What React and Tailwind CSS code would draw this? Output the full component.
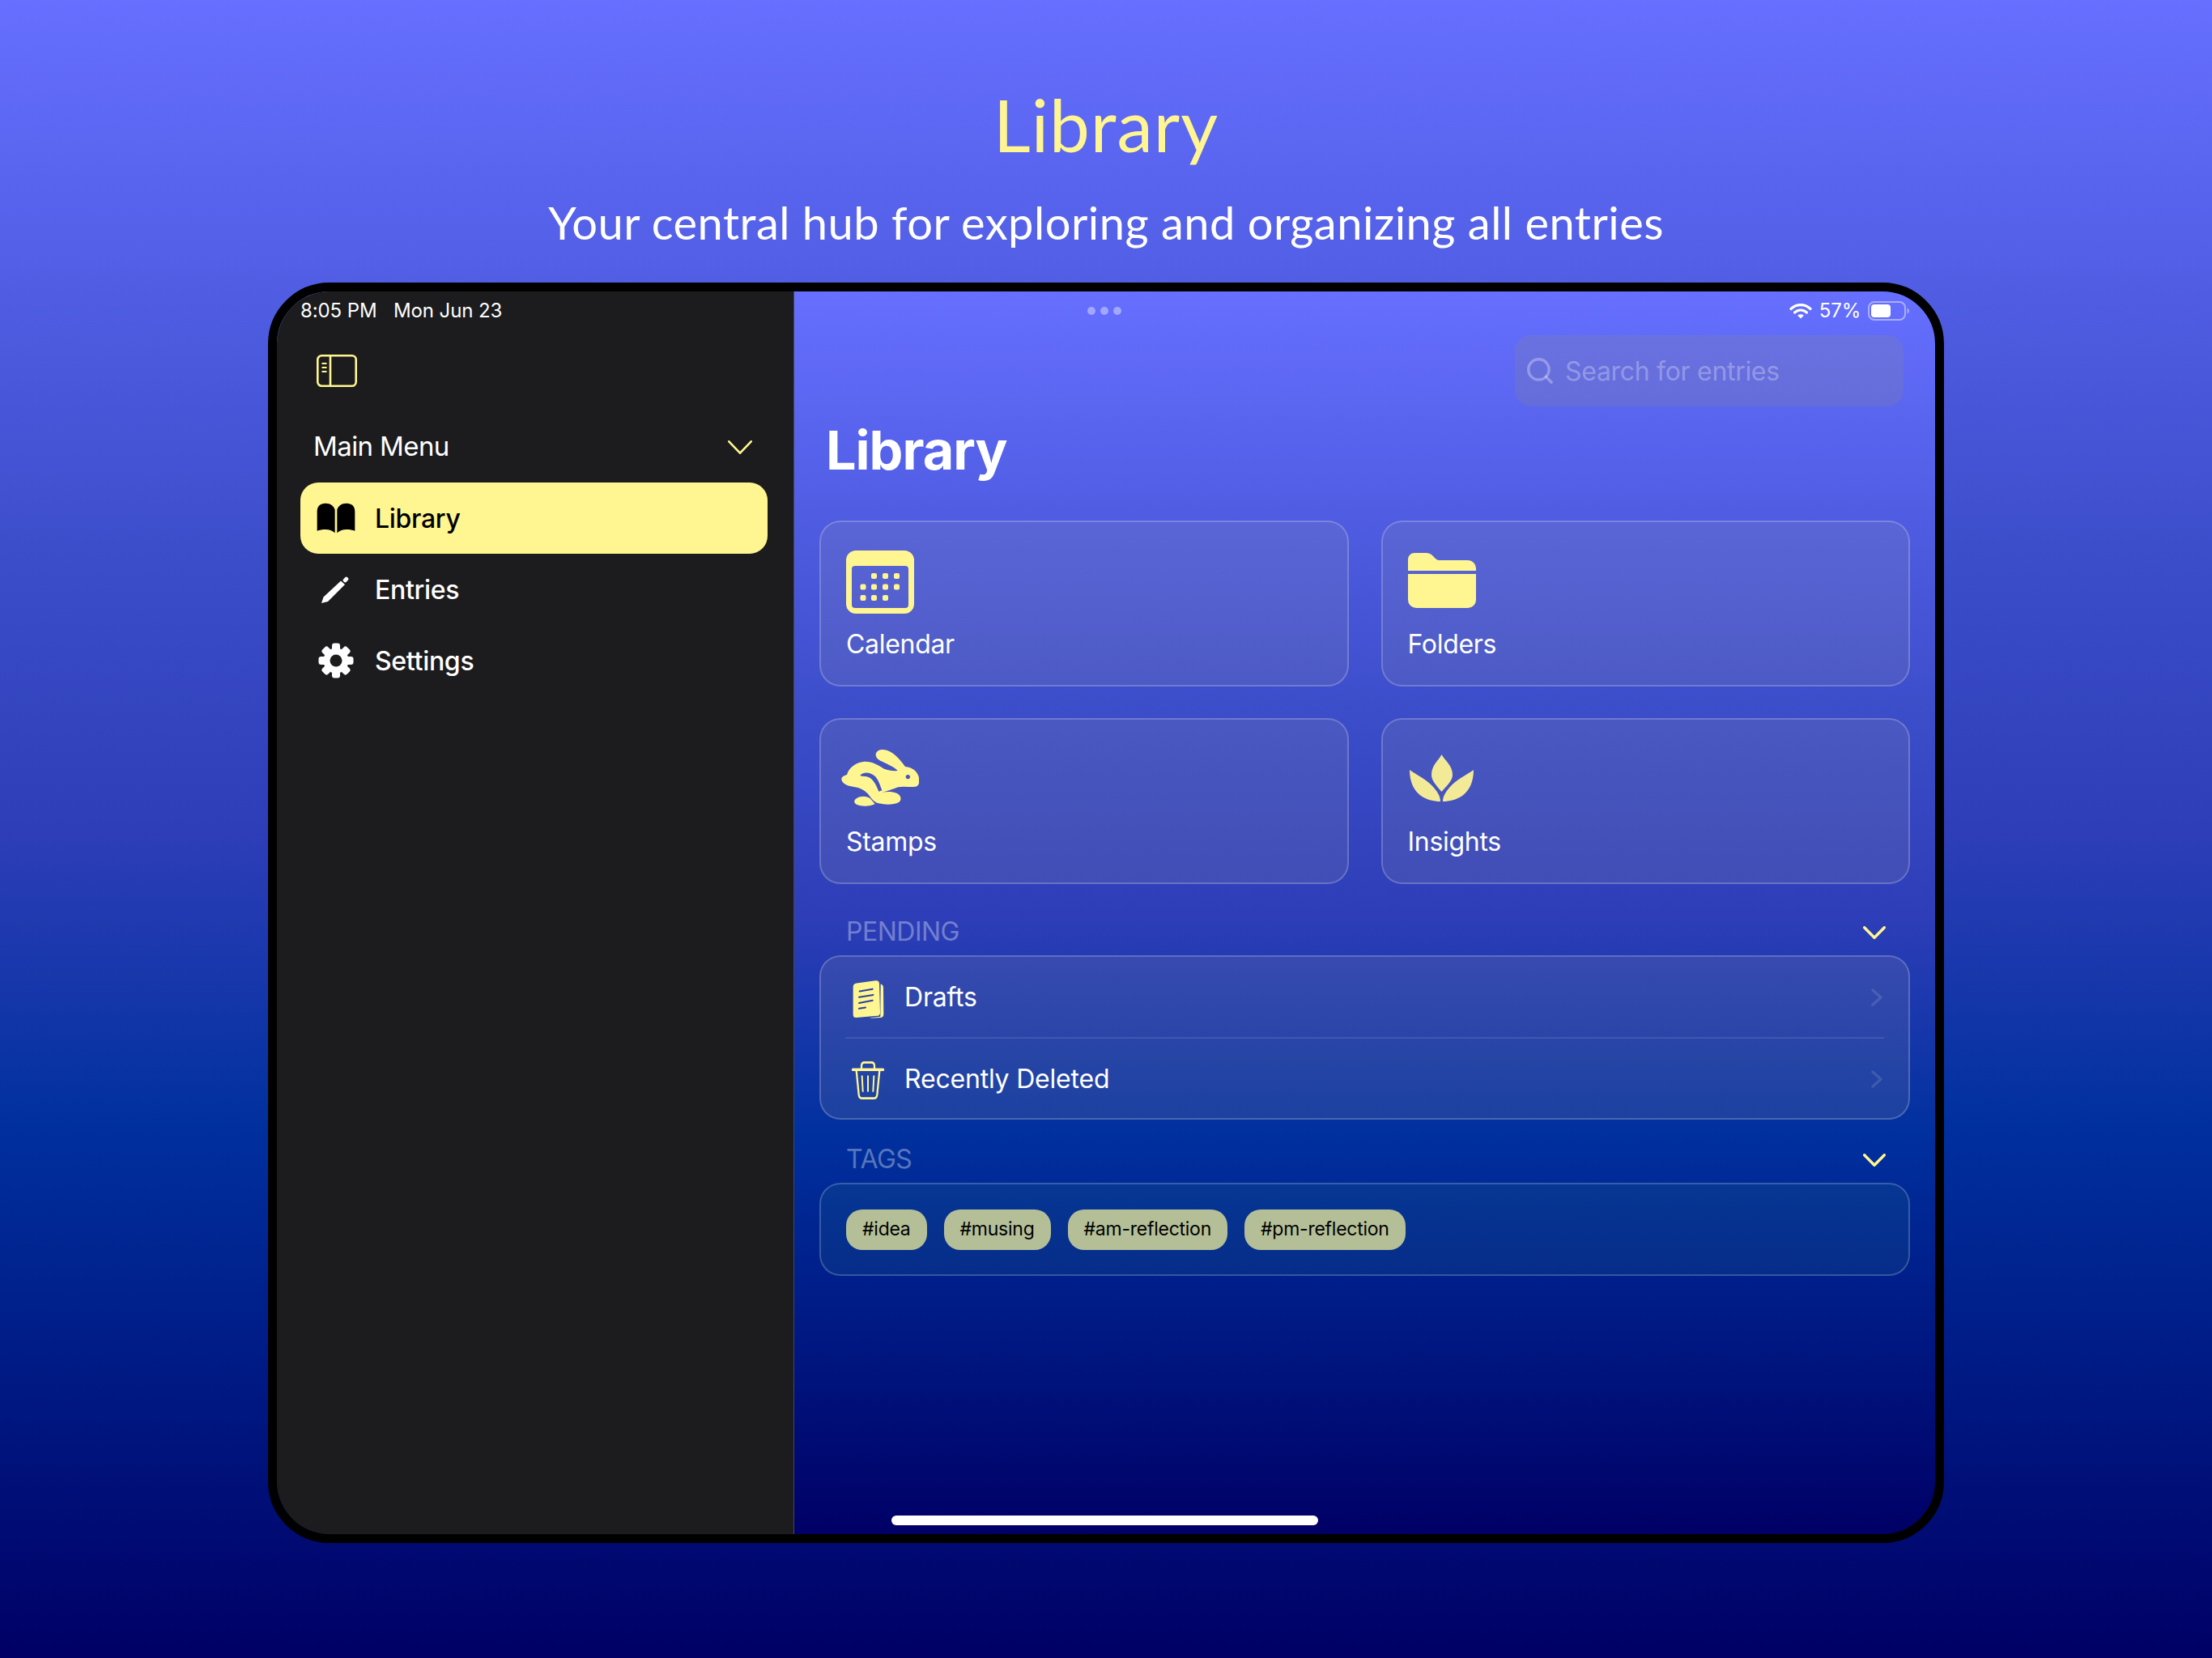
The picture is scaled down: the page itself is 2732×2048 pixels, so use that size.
import React from 'react';
import { Search } from 'lucide-react';

const YELLOW = '#fff691';

const PanelIcon = () => (
  <svg width="50" height="40" viewBox="0 0 50 40" fill="none" stroke={YELLOW} strokeWidth="2.6">
    <rect x="1.3" y="1.3" width="47.4" height="37.4" rx="5" />
    <path d="M17 1.3v37.4" />
    <path d="M6.5 11h6M6.5 16h6M6.5 21h6" strokeWidth="2" />
  </svg>
);

const BookIcon = () => (
  <svg width="48" height="38" viewBox="0 0 144 114" fill="#000">
    <path d="M2 104V33C2 12 14 2 33 2c19 0 31 10 35 24v86c-9-9-21-13-35-13-12 0-22 2-31 5z" />
    <path d="M142 104V33c0-21-12-31-31-31-19 0-31 10-35 24v86c9-9 21-13 35-13 12 0 22 2 31 5z" />
  </svg>
);

const PencilIcon = () => (
  <svg width="34" height="33" viewBox="0 0 34 33" fill="#fff">
    <path d="M0 33l2.500-7.500L24 5.500l5 4.500L8 31z" />
    <rect x="26.500" y="1.500" width="7" height="5" rx="2.200" transform="rotate(-45 30 4)" />
  </svg>
);

const GearIcon = () => (
  <svg width="44" height="44" viewBox="0 0 44 44">
    <circle cx="22" cy="22" r="15.5" fill="#fff" />
    {[0, 45, 90, 135, 180, 225, 270, 315].map((a) => (
      <rect key={a} x="17" y="0.5" width="10" height="10" rx="3" fill="#fff" transform={`rotate(${a} 22 22)`} />
    ))}
    <circle cx="22" cy="22" r="7.500" fill="#1c1c1e" />
  </svg>
);

const CalendarIcon = () => {
  const dots = [
    [34.5, 31.5], [48.5, 31.5], [62.5, 31.5],
    [21, 45], [34.5, 45], [48.5, 45], [62.5, 45],
    [21, 58.5], [34.5, 58.5], [48.5, 58.5],
  ];
  return (
    <svg width="84" height="78" viewBox="0 0 84 78">
      <path
        fillRule="evenodd"
        fill={YELLOW}
        d="M12 0h60a12 12 0 0 1 12 12v54a12 12 0 0 1-12 12H12A12 12 0 0 1 0 66V12A12 12 0 0 1 12 0zM11 19a4 4 0 0 0-4 4v44a4 4 0 0 0 4 4h62a4 4 0 0 0 4-4V23a4 4 0 0 0-4-4z"
      />
      {dots.map(([x, y]) => (
        <rect key={`${x}-${y}`} x={x - 3.5} y={y - 3.5} width="7" height="7" rx="2" fill={YELLOW} />
      ))}
    </svg>
  );
};

const FolderIcon = () => (
  <svg width="84" height="68" viewBox="0 0 84 68" fill={YELLOW}>
    <path d="M0 22V8a8 8 0 0 1 8-8h14c4 0 6 1 9 4l3 3c1.500 1.500 3 2 5 2h35a10 10 0 0 1 10 10v3z" />
    <path d="M0 26h84v32a10 10 0 0 1-10 10H10A10 10 0 0 1 0 58z" />
  </svg>
);

const RabbitIcon = () => (
  <svg width="97" height="72" viewBox="24 18 291 216">
    <path
      fill={YELLOW}
      fillRule="evenodd"
      d="M155 38C158 22 178 18 198 24C222 32 244 56 264 84C292 86 314 104 316 132C317 148 312 158 298 159C280 160 256 156 238 160C220 166 198 176 176 180C196 176 216 176 232 182C250 190 252 208 240 216C222 226 190 226 166 220C148 216 140 204 130 190C118 174 100 164 78 160C58 156 38 152 30 138C24 126 32 118 48 114C54 92 76 70 108 66C136 62 160 76 186 92C204 98 222 102 236 98C220 84 196 74 176 64C164 58 154 50 155 38Z M97 116C102 122 120 116 134 126C150 138 158 156 166 176L178 172C170 150 164 130 150 118C134 104 110 102 97 116Z M274 114a8 8 0 1 0 .01 0Z"
    />
    <path
      fill={YELLOW}
      d="M80 204C92 192 122 190 134 202L152 222C130 234 96 232 80 222C74 216 74 210 80 204Z"
    />
  </svg>
);

const LotusIcon = () => (
  <svg width="79" height="58" viewBox="0 0 79 58" fill="#f3ea98">
    <path d="M39.500 0C43 7 53 13 53 25C53 33 45 39 39.500 46C34 39 27 33 27 25C27 13 36 7 39.500 0Z" />
    <path d="M0 19C8 25 22 31 30 41C35 47 38 52 38 58C22 58 0 50 0 19Z" />
    <path d="M79 19C71 25 57 31 49 41C44 47 41 52 41 58C57 58 79 50 79 19Z" />
  </svg>
);

const DraftsIcon = () => (
  <svg width="60" height="57" viewBox="0 0 180 165" preserveAspectRatio="none">
    <path fill={YELLOW} d="M131 36c7 2 9 5 10 12l1 96c0 8-4 12-12 12l-48 3c8 0 14-2 16-3l32-3z" />
    <path fill={YELLOW} d="M42 33l70-9c9-1 14 3 14 12l3 102c0 8-4 12-11 12l-78 6c-7 0-11-3-11-10V46c0-8 5-12 13-13z" />
    <path d="M53 62l48-8M51 83l52-8M51 104l50-9M51 124l24-4" stroke="#2c3fa0" strokeWidth="6" strokeLinecap="round" fill="none" />
  </svg>
);

const TrashIcon = () => (
  <svg width="60" height="56" viewBox="0 0 180 144" preserveAspectRatio="none" fill="none" stroke={YELLOW} strokeWidth="7" strokeLinecap="round" strokeLinejoin="round">
    <path d="M28 42h112" strokeWidth="9" />
    <path d="M60 40V30c0-7 4-11 11-11h26c7 0 11 4 11 11v10" />
    <path d="M41 44l9 77c1 8 5 12 13 12h42c8 0 12-4 13-12l9-77" />
    <path d="M62 63l3 47M84 63v47M106 63l-3 47" strokeWidth="6" />
  </svg>
);

const WifiIcon = () => (
  <svg width="28" height="21" viewBox="0 0 28 21" fill="none" stroke="#fff" strokeLinecap="round" strokeWidth="3.200">
    <path d="M2 7.500C9 1 19 1 26 7.500" />
    <path d="M6.500 12c4.500-4 10.500-4 15 0" />
    <path d="M14 19.500l-3.800-3.800c2.200-1.800 5.400-1.800 7.600 0z" fill="#fff" stroke="none" />
  </svg>
);

const BatteryIcon = () => (
  <svg width="51" height="24" viewBox="0 0 51 24" fill="none">
    <rect x="1" y="1" width="45" height="22" rx="7" stroke="#fff" strokeOpacity="0.45" strokeWidth="2" />
    <rect x="4" y="4" width="24" height="16" rx="4" fill="#fff" />
    <path d="M48.500 8.500c1.500.8 2.500 2 2.500 3.500s-1 2.700-2.500 3.500z" fill="#fff" fillOpacity="0.45" />
  </svg>
);

const ChevronDown = ({ width, height, weight }) => (
  <svg width={width} height={height} viewBox={`0 0 ${width} ${height}`} fill="none" stroke={YELLOW} strokeWidth={weight} strokeLinecap="round" strokeLinejoin="round">
    <path d={`M${weight / 2} ${weight / 2}L${width / 2} ${height - weight / 2}L${width - weight / 2} ${weight / 2}`} />
  </svg>
);

const RowChevron = () => (
  <svg width="14" height="22" viewBox="0 0 14 22" fill="none" stroke="#fff" strokeOpacity="0.12" strokeWidth="3.500" strokeLinecap="round" strokeLinejoin="round">
    <path d="M2 2l10 9-10 9" />
  </svg>
);

const menu = [
  { label: 'Library', icon: <BookIcon />, slot: 'pl-[20px]', active: true },
  { label: 'Entries', icon: <PencilIcon />, slot: 'pl-[26px]' },
  { label: 'Settings', icon: <GearIcon />, slot: 'pl-[22px]' },
];

const Sidebar = () => (
  <aside className="w-[639px] shrink-0 bg-[#1c1c1e] border-r border-[#48484a] pl-[29px] pr-[32px]">
    <div className="h-[46px] pt-[2px] flex items-center text-[24px] text-white tracking-[-0.1px]">
      <span className="w-[115px]">8:05 PM</span>
      <span>Mon Jun 23</span>
    </div>
    <div className="mt-[32px] ml-[20px] h-[40px]">
      <PanelIcon />
    </div>
    <div className="mt-[46px] h-[56px] flex items-center justify-between pl-[16px] pr-[19px]">
      <span className="text-[33px] text-white tracking-[-0.6px]">Main Menu</span>
      <ChevronDown width={30} height={17} weight={2.6} />
    </div>
    <nav className="mt-[16px]">
      {menu.map((m) => (
        <div
          key={m.label}
          className={`h-[88px] flex items-center rounded-[22px] ${m.active ? 'bg-[#fff691] text-black' : 'text-white'}`}
        >
          <span className={`w-[92px] shrink-0 flex justify-start ${m.slot}`}>{m.icon}</span>
          <span className="pt-[2px] text-[32px] tracking-[-0.3px] font-medium">{m.label}</span>
        </div>
      ))}
    </nav>
  </aside>
);

const cards = [
  { label: 'Calendar', icon: <CalendarIcon />, iconClass: 'pl-[31px] pt-[35px] h-[131px]' },
  { label: 'Folders', icon: <FolderIcon />, iconClass: 'pl-[31px] pt-[38px] h-[131px]' },
  { label: 'Stamps', icon: <RabbitIcon />, iconClass: 'pl-[24px] pt-[36px] h-[131px]' },
  { label: 'Insights', icon: <LotusIcon />, iconClass: 'pl-[33px] pt-[43px] h-[131px]' },
];

const SectionHeader = ({ title, className }) => (
  <div className={`flex items-end justify-between pb-[9px] pl-[33px] pr-[30px] ${className}`}>
    <span className="text-[32px] leading-[40px] text-white/35 tracking-[-0.5px]">{title}</span>
    <span className="pb-[11px]">
      <ChevronDown width={28} height={16} weight={3.4} />
    </span>
  </div>
);

const panel = 'rounded-[26px] border-2 border-white/20';
const grayFill = 'bg-[rgba(150,150,160,0.17)]';

const Main = () => (
  <main className="relative flex-1 pl-[31px] pr-[31px]">
    <div className="h-[46px] pt-[2px] flex items-center justify-end gap-[9px] mr-[1px]">
      <div className="absolute left-[362px] top-[19px] flex gap-[6px]">
        <span className="w-[10px] h-[10px] rounded-full bg-white/40" />
        <span className="w-[10px] h-[10px] rounded-full bg-white/40" />
        <span className="w-[10px] h-[10px] rounded-full bg-white/40" />
      </div>
      <WifiIcon />
      <span className="text-[24px] text-white tracking-[-0.2px]">57%</span>
      <BatteryIcon />
    </div>
    <div className="mt-[8px] ml-auto mr-[8px] w-[480px] h-[88px] rounded-[20px] bg-[rgba(130,130,150,0.25)] flex items-center pl-[12px]">
      <Search className="w-[38px] h-[38px] text-white/30" strokeWidth={2.200} />
      <span className="ml-[12px] pt-[2px] text-[32px] tracking-[-0.3px] text-white/30">Search for entries</span>
    </div>
    <div className="h-[106px] pt-[4px] flex items-center pl-[8px]">
      <h1 className="text-[66.5px] font-bold text-white tracking-[-1px]">Library</h1>
    </div>
    <div className="mt-[35px] grid grid-cols-2 gap-x-[40px] gap-y-[39px]">
      {cards.map((c) => (
        <div key={c.label} className={`h-[205px] ${panel} ${grayFill}`}>
          <div className={c.iconClass}>{c.icon}</div>
          <div className="pl-[31px] text-[32px] leading-[40px] text-white tracking-[-0.3px]">{c.label}</div>
        </div>
      ))}
    </div>
    <SectionHeader title="PENDING" className="h-[88px]" />
    <div className={`h-[203px] ${panel} ${grayFill}`}>
      <div className="h-[99px] flex items-center pl-[30px] pr-[32px]">
        <span className="w-[73px] shrink-0"><DraftsIcon /></span>
        <span className="flex-1 text-[32px] text-white tracking-[-0.2px]">Drafts</span>
        <RowChevron />
      </div>
      <div className="mx-[30px] h-[2px] bg-white/10" />
      <div className="h-[98px] pt-[2px] flex items-center pl-[30px] pr-[32px]">
        <span className="w-[73px] shrink-0"><TrashIcon /></span>
        <span className="flex-1 text-[32px] text-white tracking-[-0.2px]">Recently Deleted</span>
        <RowChevron />
      </div>
    </div>
    <SectionHeader title="TAGS" className="h-[78px]" />
    <div className={`h-[115px] flex items-center gap-[21px] pl-[31px] ${panel} bg-[rgba(40,130,130,0.14)]`}>
      {['#idea', '#musing', '#am-reflection', '#pm-reflection'].map((t) => (
        <span key={t} className="h-[50px] flex items-center px-[20px] rounded-[20px] bg-[#b4bf97] text-[23px] text-black tracking-[-0.25px]">
          {t}
        </span>
      ))}
    </div>
    <div className="absolute left-[120px] bottom-[11px] w-[527px] h-[12px] rounded-full bg-white" />
  </main>
);

export default function App() {
  return (
    <div
      className="w-full h-[2048px] overflow-hidden flex flex-col items-center font-['Inter',sans-serif] bg-[linear-gradient(180deg,#666fff_0%,#3d4ecb_33%,#2e3eb8_50%,#00309e_68%,#000066_100%)]"
    >
      <div className="mt-[99px] h-[110px] flex items-center text-[89px] text-[#fff691] font-['Lato',sans-serif] font-normal tracking-[1px]">
        Library
      </div>
      <div className="mt-[33px] h-[65px] flex items-center text-[56px] text-white font-['Lato',sans-serif] font-normal tracking-[0.5px]">
        Your central hub for exploring and organizing all entries
      </div>
      <div className="mt-[42px] w-[2070px] h-[1557px] shrink-0 rounded-[76px] border-[11px] border-black overflow-hidden flex bg-[linear-gradient(180deg,#666fff_0%,#3d4ecb_33%,#2e3eb8_50%,#00309e_68%,#000066_100%)]">
        <Sidebar />
        <Main />
      </div>
    </div>
  );
}
